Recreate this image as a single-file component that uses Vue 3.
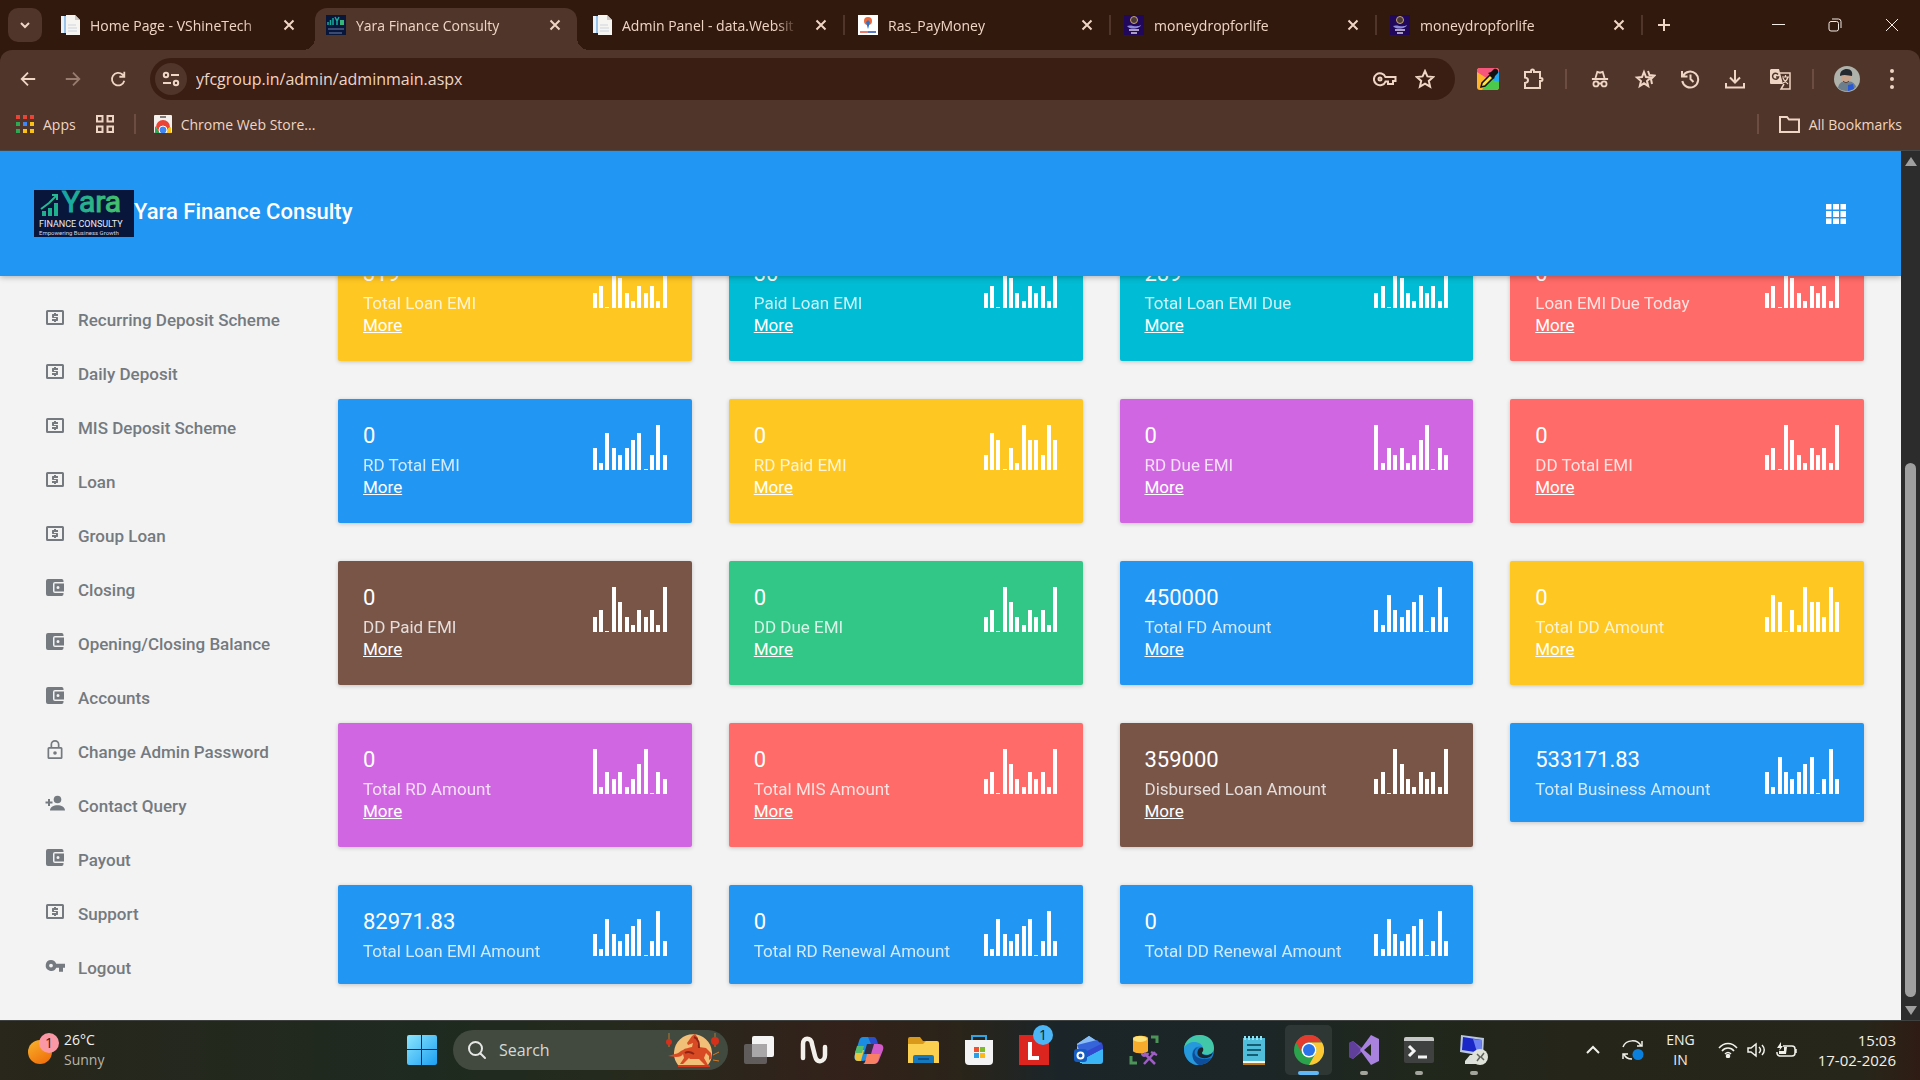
<template>
  <div class="screen">
    <header class="chrome">
      <div class="tabstrip">
        <button class="tab-search" aria-label="Search tabs">
          <svg width="14" height="14" viewBox="0 0 14 14" class="line"><path d="M3 5l4 4 4-4" /></svg>
        </button>
        <div class="tabs">
          <div v-for="(tab, i) in tabs" :key="i" class="tab" :class="{ active: tab.active, divided: i > 1 }">
            <svg v-if="tab.icon === 'page'" width="20" height="20" viewBox="0 0 20 20">
              <path d="M1 1h12v17H1z" fill="#9cc4ea" /><path d="M1 1h3v17H1z" fill="#e8f2fb" />
              <path d="M6 0h9l5 5v15H6z" fill="#f7f5f2" /><path d="M15 0v5h5z" fill="#cfc9c3" />
              <path d="M8 10h8M8 13h9M8 16h9" stroke="#cbd5dc" />
            </svg>
            <svg v-else-if="tab.icon === 'yara'" width="20" height="20" viewBox="0 0 20 20">
              <path d="M0 0h20v20H0z" fill="#07163a" />
              <path d="M2 10V7m2.5 3V5m2.500 5V3M9 2l2 4 2-4m-2 4v4" stroke="#16a99c" stroke-width="1.5" fill="none" />
              <path d="M14 5h4v5h-4z" fill="#36b678" /><path d="M2 14h16M3 18h13" stroke="#6f7fa8" />
            </svg>
            <svg v-else-if="tab.icon === 'ras'" width="20" height="20" viewBox="0 0 20 20">
              <path d="M0 0h20v20H0z" fill="#fff" /><circle cx="10" cy="6" r="4" fill="#ef6a3a" />
              <path d="M10 5l2 2-2 7-2-7z" fill="#2c74c9" /><path d="M2 17h8" stroke="#e8796d" stroke-width="2" /><path d="M10 17h8" stroke="#5d79c5" stroke-width="2" />
            </svg>
            <svg v-else width="20" height="20" viewBox="0 0 20 20">
              <path d="M0 0h20v20H0z" fill="#22085c" /><circle cx="10" cy="5" r="3.5" fill="#4a3a35" stroke="#c6a574" />
              <path d="M3 11c4-2 9 2 14-1-1 4-11 5-14 1z" fill="#8d8bd8" /><path d="M5 15h10M7 18h6" stroke="#d8cfe8" stroke-width="1.5" />
            </svg>
            <span class="tab-title">{{ tab.title }}</span>
            <button class="tab-close" aria-label="Close tab">
              <svg width="12" height="12" viewBox="0 0 12 12" class="line"><path d="M1.500 1.500l9 9M10.500 1.500l-9 9" /></svg>
            </button>
          </div>
        </div>
        <button class="new-tab" aria-label="New tab">
          <svg width="14" height="14" viewBox="0 0 14 14" class="line"><path d="M7 1v12M1 7h12" /></svg>
        </button>
        <div class="window-controls">
          <button aria-label="Minimize"><svg width="14" height="14" viewBox="0 0 14 14" class="thin"><path d="M1 6.500h13" /></svg></button>
          <button aria-label="Restore"><svg width="14" height="14" viewBox="0 0 14 14" class="thin"><rect x="1" y="3.5" width="9.5" height="9.5" rx="2" /><path d="M4 1h6.500a2.500 2.500 0 0 1 2.500 2.500V10" /></svg></button>
          <button aria-label="Close"><svg width="14" height="14" viewBox="0 0 14 14" class="thin"><path d="M1 1l12 12M13 1L1 13" /></svg></button>
        </div>
      </div>

      <div class="toolbar">
        <button class="tool" aria-label="Back"><svg width="18" height="18" viewBox="0 0 20 20" class="line"><path d="M18 10H3M10 3l-7 7 7 7" /></svg></button>
        <button class="tool dim" aria-label="Forward"><svg width="18" height="18" viewBox="0 0 20 20" class="line"><path d="M2 10h15M10 3l7 7-7 7" /></svg></button>
        <button class="tool" aria-label="Reload"><svg width="18" height="18" viewBox="0 0 20 20" class="line"><path d="M17 12a7 7 0 1 1-2-7l2 2M17 2v5.500h-5.500" /></svg></button>
        <div class="omnibox">
          <button class="site-info" aria-label="Site information">
            <svg width="18" height="18" viewBox="0 0 18 18" class="line"><circle cx="4" cy="5" r="2.2" /><path d="M9 5h8M1 13h8" /><circle cx="14" cy="13" r="2.2" /></svg>
          </button>
          <input v-model="url" class="url" type="text" aria-label="Address">
          <button class="omni-btn" aria-label="Passwords"><svg width="24" height="20" viewBox="0 0 24 20" class="line"><path d="M12.500 8a6 6 0 1 0 0 4.500H15V15h5v-3h2.500V8z" /><circle cx="7" cy="10" r="1.5" /></svg></button>
          <button class="omni-btn" aria-label="Bookmark"><svg width="20" height="20" viewBox="0 0 20 20" class="line"><path d="M10 2l2.400 5.400 5.800.6-4.400 3.900 1.300 5.700L10 14.600l-5.100 3 1.300-5.700L1.800 8l5.800-.6z" /></svg></button>
        </div>
        <button class="tool" aria-label="Color picker">
          <svg width="22" height="22" viewBox="0 0 22 22">
            <rect width="22" height="22" rx="3" fill="#ffb52b" /><path d="M3 0h16a3 3 0 0 1 3 3L11 11 0 4a3 3 0 0 1 3-4z" fill="#f7567c" /><path d="M22 3v12L11 11z" fill="#21a8f5" />
            <path d="M22 14v5a3 3 0 0 1-3 3H5l6-11z" fill="#4cc94a" /><path d="M4 19l1-4 8-8 3 3-8 8z" fill="#ffe14a" stroke="#111" stroke-width="1.5" /><path d="M11 5l3-1 3-3c3-1 5 2 4 4l-3 3-1 3z" fill="#111" />
          </svg>
        </button>
        <button class="tool" aria-label="Extensions"><svg width="22" height="22" viewBox="0 0 22 22" class="line"><path d="M3 4h6V3a1.500 1.500 0 0 1 3 0v1h6v6h1a1.500 1.500 0 0 1 0 3h-1v7H3v-5c4-.5 4-5 0-5.500z" /></svg></button>
        <span class="sep" />
        <button class="tool" aria-label="Incognito"><svg width="18" height="18" viewBox="0 0 20 20" class="line"><path d="M1 10h18M5 9l2-7 3 1 3-1 2 7M8.500 15h3" /><circle cx="5.5" cy="15.5" r="2.8" /><circle cx="14.5" cy="15.5" r="2.8" /></svg></button>
        <button class="tool" aria-label="Bookmarks list"><svg width="22" height="22" viewBox="0 0 22 22" class="line"><path d="M10 4l2 5 5 .5-4 3.500 1.200 5L10 15.300 5.800 18 7 13 3 9.500 8 9zM14 3l1.500 4 5 .5-3.500 3.500 1 5" /></svg></button>
        <button class="tool" aria-label="History"><svg width="20" height="20" viewBox="0 0 20 20" class="line"><path d="M3 7a8 8 0 1 1-.7 5M2 2v5.500h5.500M10.500 5.500V10l3 3" /></svg></button>
        <button class="tool" aria-label="Downloads"><svg width="20" height="20" viewBox="0 0 20 20" class="line"><path d="M10 1v12M5 8.500l5 5 5-5M1 14v4.500h18V14" /></svg></button>
        <button class="tool" aria-label="Translate">
          <svg width="22" height="22" viewBox="0 0 22 22"><path d="M2 1h8l4 15H2a1 1 0 0 1-1-1V2z" fill="#efd5c4" /><path d="M11 5h10v16H12l3-5" fill="none" stroke="#efd5c4" stroke-width="1.5" /><path d="M9 6.500A3 3 0 1 0 9.500 9H7" fill="none" stroke="#50352a" stroke-width="1.5" /><path d="M13 9h7M16.500 7v2M19 9c-1 4-3 5-5 6M14 10c1 3 3 4 5 6" fill="none" stroke="#efd5c4" stroke-width="1.2" /></svg>
        </button>
        <span class="sep" />
        <button class="tool" aria-label="Profile">
          <svg width="26" height="26" viewBox="0 0 26 26"><circle cx="13" cy="13" r="13" fill="#aeb2ab" /><path d="M4 22c1-6 5-7 9-7s8 2 9 6a13 13 0 0 1-18 1z" fill="#6c7d8c" /><path d="M14 19l5-1 1 5-6 2z" fill="#2958d8" /><ellipse cx="12" cy="11" rx="5" ry="6" fill="#c9a58e" /><path d="M6 10c0-5 3-7 7-7s6 3 5 7c-3 0-7-2-12 0z" fill="#252a31" /><path d="M9 15c2 2 4 2 6 0" stroke="#39312e" fill="none" /></svg>
        </button>
        <button class="tool" aria-label="Menu"><svg width="20" height="22" viewBox="0 0 20 22" fill="#efd5c4"><circle cx="10" cy="3" r="2" /><circle cx="10" cy="11" r="2" /><circle cx="10" cy="19" r="2" /></svg></button>
      </div>

      <nav class="bookmarks">
        <a href="#" class="bookmark">
          <svg width="18" height="18" viewBox="0 0 18 18">
            <rect v-for="(c, i) in appColors" :key="i" :x="(i % 3) * 7" :y="Math.floor(i / 3) * 7" width="4" height="4" :fill="c" />
          </svg>
          Apps
        </a>
        <a href="#" class="bookmark" aria-label="Tab groups"><svg width="18" height="18" viewBox="0 0 18 18" class="line"><path d="M1 1h5.500v5.500H1zM11.500 1H17v5.500h-5.500zM1 11.500h5.500V17H1zM11.500 11.500H17V17h-5.500z" /></svg></a>
        <span class="bar-sep" />
        <a href="#" class="bookmark store">
          <svg width="18" height="18" viewBox="0 0 18 18"><rect width="18" height="18" rx="1" fill="#f3f0ee" /><path d="M6 2h6" stroke="#5b5552" stroke-width="1.5" /><path d="M2 12a7 7 0 0 1 14 0l-3 6H5z" fill="#e94435" /><path d="M1 11l5 7H1z" fill="#2fa853" /><path d="M17 12v6h-5l2-5z" fill="#fbc116" /><circle cx="9" cy="15" r="4" fill="#4286f5" stroke="#fff" /></svg>
          Chrome Web Store...
        </a>
        <span class="bar-sep push" />
        <a href="#" class="bookmark all"><svg width="21" height="18" viewBox="0 0 21 18" class="line"><path d="M1 2h7l2 2.500h10V17H1z" /></svg>All Bookmarks</a>
      </nav>
    </header>

    <div class="viewport">
      <div class="page">
        <div class="header">
          <a href="#" class="brand">
            <svg width="100" height="47" viewBox="0 0 100 47">
              <defs><linearGradient id="yara"><stop offset="0" stop-color="#12a6a8" /><stop offset="1" stop-color="#46c268" /></linearGradient></defs>
              <path d="M0 0h100v47H0z" fill="#07163a" />
              <path d="M8 26v-5h4v5zM14 26v-8h4v8zM20 26V13h4v13z" fill="#1fb08d" /><path d="M7 19l8-6 8-8M18 5h5v5" fill="none" stroke="#27b994" stroke-width="2" />
              <text x="28" y="22" font-size="30" fill="url(#yara)" stroke="url(#yara)" class="logo-text">Yara</text>
              <text x="5" y="37" font-size="9" fill="#e8ecf3" class="logo-text">FINANCE CONSULTY</text>
              <text x="5" y="45" font-size="6" fill="#cfd5e2" class="logo-text">Empowering Business Growth</text>
            </svg>
            <span>Yara Finance Consulty</span>
          </a>
          <button aria-label="Apps">
            <svg width="20" height="20" viewBox="0 0 20 20" fill="#fff"><path d="M0 0h5.500v5.500H0zM7 0h6v5.500H7zM14.500 0H20v5.500h-5.500zM0 7h5.500v6H0zM7 7h6v6H7zM14.500 7H20v6h-5.500zM0 14.500h5.500V20H0zM7 14.500h6V20H7zM14.500 14.500H20V20h-5.500z" /></svg>
          </button>
        </div>

        <div class="content">
          <aside class="sidebar">
            <a v-for="item in menu" :key="item.label" href="#" class="menu-item">
              <svg width="20" height="20" viewBox="0 0 20 20" fill="currentColor">
                <g v-if="item.icon === 'money'"><path d="M2.500 2h15A1.500 1.500 0 0 1 19 3.500v12a1.500 1.500 0 0 1-1.500 1.500h-15A1.500 1.500 0 0 1 1 15.500v-12A1.500 1.500 0 0 1 2.500 2zm.5 2v11h14V4z" fill-rule="evenodd" /><path d="M9 5h2v1h2v2H9v1h3.500l.5.500v3l-.5.500H11v1H9v-1H7v-2h4v-1H7.500L7 9.500v-3l.5-.5H9z" /></g>
                <g v-else-if="item.icon === 'wallet'"><path d="M3 1h14a2 2 0 0 1 1.500 2v1H10a2 2 0 0 0-2 2v7a2 2 0 0 0 2 2h8.500v1a2 2 0 0 1-1.500 2H3a2 2 0 0 1-2-2V3a2 2 0 0 1 2-2z" /><path d="M9.500 5.500H19v8H9.500zM13 8a1.500 1.500 0 1 0 0 3 1.500 1.500 0 0 0 0-3z" fill-rule="evenodd" /></g>
                <g v-else-if="item.icon === 'lock'"><path d="M10 0a4.500 4.500 0 0 1 4.500 4.500V7H16a1.500 1.500 0 0 1 1.500 1.500v9A1.500 1.500 0 0 1 16 19H4a1.500 1.500 0 0 1-1.500-1.500v-9A1.500 1.500 0 0 1 4 7h1.500V4.500A4.500 4.500 0 0 1 10 0zm0 1.700a2.800 2.800 0 0 0-2.800 2.800V7h5.600V4.500A2.800 2.800 0 0 0 10 1.700zM4.200 8.700v8.600h11.600V8.700z" fill-rule="evenodd" /><circle cx="10" cy="13" r="1.8" /></g>
                <g v-else-if="item.icon === 'person'"><circle cx="12.5" cy="5.5" r="3.8" /><path d="M5 16.500c0-7 15-7 15 0zM3 5h2v2.500h2.500v2H5V12H3V9.500H.5v-2H3z" /></g>
                <path v-else d="M6 4a5.500 5.500 0 0 1 5.200 3.800H20v4h-2v4h-4v-4h-2.800A5.500 5.500 0 1 1 6 4zm0 3.700a1.900 1.900 0 1 0 0 3.800 1.900 1.900 0 0 0 0-3.800z" fill-rule="evenodd" />
              </svg>
              {{ item.label }}
            </a>
          </aside>

          <main class="cards">
            <div v-for="card in cards" :key="card.label" class="card" :class="card.color">
              <div>
                <h2>{{ card.value }}</h2>
                <small>{{ card.label }}</small>
                <a v-if="!card.noLink" href="#">More</a>
              </div>
              <div class="spark">
                <span v-for="(n, i) in sparks[card.spark]" :key="i" :style="{ height: barHeight(n) }" />
              </div>
            </div>
          </main>
        </div>
      </div>

      <div class="scrollbar">
        <svg width="12" height="10" viewBox="0 0 12 10"><path d="M6 0l6 9H0z" fill="#9f9f9f" /></svg>
        <div class="track"><div class="thumb" /></div>
        <svg width="12" height="10" viewBox="0 0 12 10"><path d="M6 10l6-9H0z" fill="#9f9f9f" /></svg>
      </div>
    </div>

    <footer class="taskbar">
      <button class="weather">
        <svg width="34" height="34" viewBox="0 0 34 34">
          <defs><linearGradient id="sun" x2="0.6" y2="1"><stop offset="0" stop-color="#f7b52c" /><stop offset="1" stop-color="#f0720d" /></linearGradient></defs>
          <circle cx="13" cy="19" r="12" fill="url(#sun)" /><circle cx="22" cy="10" r="10" fill="#fb98a5" />
          <text x="22" y="15" text-anchor="middle" font-size="14" fill="#30191c">1</text>
        </svg>
        <span class="two-line"><span>26°C</span><span class="muted">Sunny</span></span>
      </button>

      <button class="task" aria-label="Start">
        <svg width="30" height="30" viewBox="0 0 30 30"><defs><linearGradient id="win" x2="1" y2="1"><stop offset="0" stop-color="#8ce6fd" /><stop offset="1" stop-color="#1c9ff2" /></linearGradient></defs><path d="M2 0h12v14H0V2a2 2 0 0 1 2-2zM15 0h13a2 2 0 0 1 2 2v12H15zM0 15h14v15H2a2 2 0 0 1-2-2zM15 15h15v13a2 2 0 0 1-2 2H15z" fill="url(#win)" /></svg>
      </button>
      <label class="search">
        <svg width="20" height="20" viewBox="0 0 20 20" fill="none" stroke="#e5e8e4" stroke-width="2" stroke-linecap="round"><circle cx="8.5" cy="8.5" r="6.5" /><path d="M13.500 13.500L18 18" /></svg>
        <input type="text" placeholder="Search" aria-label="Search">
        <svg width="58" height="36" viewBox="0 0 58 36">
          <path d="M14 33a19 19 0 1 1 30 0z" fill="#f2bf78" /><path d="M14 34h32" stroke="#d9361f" stroke-width="2" />
          <path d="M31 2l-3 2-5 7 1 2 5-2-1 4c-3 1-7 1-9 3-3 1-5 4-8 4l-7 2 8 1c4 0 6-1 7-3l1 4-4 6h3l6-6 1 1 9 0 6 6h3l-4-7 2-5 3 3v4l3-2-1-5-5-5-7-1c-2-2-1-6-1-9z" fill="#d84a24" />
          <path d="M30 5c5 2 5 7 5 11M21 21c3-2 6-1 9 1" fill="none" stroke="#8f2415" stroke-width="2" />
          <path d="M5 1v14M51 1v14" stroke="#b6782c" /><circle cx="5" cy="10" r="3" fill="#d6301b" /><circle cx="51" cy="9" r="4" fill="#d6301b" /><path d="M49 23l6-3M49 28l6 1" stroke="#d77a24" />
        </svg>
      </label>

      <div class="tasks">
        <button class="task" aria-label="Task view"><svg width="30" height="30" viewBox="0 0 30 30"><rect x="8" y="1" width="22" height="21" rx="2" fill="#f4f4f4" /><rect y="9" width="23" height="20" rx="2" fill="#6b6667" opacity=".85" /><path d="M8 9h15v13H8z" fill="#aaa7a9" /></svg></button>
        <button class="task" aria-label="Notes"><svg width="28" height="28" viewBox="0 0 28 28" fill="none" stroke="#f3f0ec" stroke-width="4.5" stroke-linecap="round"><path d="M3 22V8c0-7 8-7 9 0l3 12c2 8 10 6 10-1V11" /></svg></button>
        <button class="task" aria-label="Copilot"><svg width="30" height="28" viewBox="0 0 30 28"><path d="M9 1h11l-6 20c-1 3-3 4-6 4H4c-4 0-4-4-3-7L5 5c1-3 2-4 4-4z" fill="#1b8ee4" /><path d="M2 14h8L7 25H4c-4 0-4-4-2-11z" fill="#e9c43c" /><path d="M3 10h7l-2 7H1z" fill="#54be6c" /><path d="M17 8h8c4 0 5 3 4 6l-4 10c-1 3-3 4-6 4H9c5 0 5-7 8-20z" fill="#d15bc8" /><path d="M13 18h13l-2 7c-1 2-3 3-5 3H9c2 0 3-5 4-10z" fill="#fa8064" /><path d="M13 8h7l-3 10h-7z" fill="#352b43" /><path d="M14 1h6c2 0 3 3 4 7h-7z" fill="#294fcf" /></svg></button>
        <button class="task" aria-label="File Explorer"><svg width="31" height="28" viewBox="0 0 31 28"><path d="M0 3a2 2 0 0 1 2-2h10l3 4h13v8H0z" fill="#d99a1c" /><path d="M0 8h15l3-3h11a2 2 0 0 1 2 2v20H0z" fill="#fbcf50" /><path d="M5 27v-6a2 2 0 0 1 2-2h17a2 2 0 0 1 2 2v6z" fill="#1679bd" /><path d="M10 22h11v2H10z" fill="#0d538e" /></svg></button>
        <button class="task" aria-label="Store"><svg width="30" height="30" viewBox="0 0 30 30"><path d="M8 7V1h14v6" fill="none" stroke="#2fa5e4" stroke-width="2" /><path d="M1 5h28v21a4 4 0 0 1-4 4H5a4 4 0 0 1-4-4z" fill="#f3f3f3" /><path d="M10 12h5v5h-5z" fill="#ef5130" /><path d="M16 12h5v5h-5z" fill="#7dba2c" /><path d="M10 18h5v5h-5z" fill="#2a9fe8" /><path d="M16 18h5v5h-5z" fill="#fbb91c" /></svg></button>
        <button class="task" aria-label="L">
          <svg width="30" height="30" viewBox="0 0 30 30"><path d="M0 0h30v30H0z" fill="#dc251e" /><path d="M11 7v16h9" fill="none" stroke="#fff" stroke-width="4" /></svg>
          <span class="badge">1</span>
        </button>
        <button class="task" aria-label="Outlook"><svg width="30" height="30" viewBox="0 0 30 30"><path d="M3 9L15 1l13 9v18H6z" fill="#62cdfa" /><path d="M3 9L15 1l8 5L3 20z" fill="#89bcf5" /><path d="M8 16L27 7c2 2 2 4 2 7L10 24z" fill="#314ad0" /><path d="M3 10l20-5 4 4-20 10z" fill="#3665d9" /><path d="M8 25l21-11v12c0 2-1 3-3 3H8z" fill="#3bb5f5" /><rect y="14" width="13" height="13" rx="3" fill="#155cc0" /><circle cx="6.5" cy="20.5" r="3" fill="none" stroke="#fff" stroke-width="2" /></svg></button>
        <button class="task" aria-label="SQL Server"><svg width="30" height="30" viewBox="0 0 30 30"><path d="M4 3c1-3 14-3 15 0v13c-1 3-14 3-15 0z" fill="#f7ad2b" /><ellipse cx="11" cy="4" rx="7" ry="3" fill="#fbe27b" /><path d="M22 2h6v6M2 21v7h6" fill="none" stroke="#4d9458" stroke-width="3" /><path d="M15 29l11-12M15 18l11 11M13 18c0 4 5 3 6 0M22 17l6 3" stroke="#9d5fc2" stroke-width="2.5" fill="none" /></svg></button>
        <button class="task" aria-label="Edge"><svg width="30" height="30" viewBox="0 0 30 30"><circle cx="15" cy="15" r="15" fill="#1680cf" /><path d="M0 14C1-4 30-5 30 13c0 6-6 8-11 6-3-1 0-2 0-5C18 7 5 5 0 14z" fill="#42c7a8" /><path d="M0 13C5 4 18 6 19 13c-6-4-12 1-10 8 1 4 4 7 7 9C7 31 0 24 0 13z" fill="#2699dd" /><path d="M14 12c-8 6-1 15 13 11-3 5-8 7-12 7C7 26 6 15 14 12z" fill="#0e4d99" /><path d="M19 13c1 3-1 4-1 5 0 3 9 3 11-1-1 4-3 5-6 6-8 1-11-3-9-8 1-2 3-3 5-2z" fill="#1c252b" /></svg></button>
        <button class="task" aria-label="Notepad"><svg width="24" height="30" viewBox="0 0 24 30"><path d="M1 3h22v24H1z" fill="#50bddb" /><path d="M1 26h22v2H1z" fill="#f7f4ea" /><path d="M1 28h22v2H1z" fill="#b87a18" /><path d="M3 1v4M7 1v4M11 1v4M15 1v4M19 1v4" stroke="#8ee4f5" stroke-width="2" /><path d="M5 10h14M5 15h14M5 20h11" stroke="#145d75" stroke-width="2" /></svg></button>
        <button class="task running current" aria-label="Chrome"><svg width="30" height="30" viewBox="0 0 30 30"><circle cx="15" cy="15" r="15" fill="#2ba24c" /><path d="M2 7.500A15 15 0 0 1 28 7.500H15a7.500 7.500 0 0 0-6.500 11z" fill="#e33b2e" /><path d="M28 7.500A15 15 0 0 1 15 30l6.500-11.500a7.500 7.500 0 0 0-6.500-11z" fill="#fcc934" /><circle cx="15" cy="15" r="7.5" fill="#fff" /><circle cx="15" cy="15" r="6" fill="#2a73e8" /></svg></button>
        <button class="task running" aria-label="Visual Studio"><svg width="30" height="30" viewBox="0 0 30 30"><path d="M0 8l4-2 18 14V9L4 24l-4-2z" fill="#7c54b9" /><path d="M4 6l8 9-8 9-4-2V8z" fill="#5f3f99" /><path d="M22 0l8 4v22l-8 4L11 15z" fill="#a981df" /><path d="M22 9v12l-7-6z" fill="#20271b" /></svg></button>
        <button class="task running" aria-label="Terminal"><svg width="30" height="26" viewBox="0 0 30 26"><rect width="30" height="26" rx="2" fill="#3f4140" /><path d="M2 0h26a2 2 0 0 1 2 2v2H0V2a2 2 0 0 1 2-2z" fill="#c5c8c6" /><path d="M5 9l5 5-5 5M14 20h9" fill="none" stroke="#f5f5f5" stroke-width="3" /></svg></button>
        <button class="task running" aria-label="Remote desktop"><svg width="30" height="30" viewBox="0 0 30 30"><path d="M2 0l23 3-1 18L1 17z" fill="#b9c6df" /><path d="M4 2l19 3-1 13L3 15z" fill="#1c27c8" /><path d="M14 4l9 1-1 13-4-1z" fill="#6d82f0" /><path d="M11 20h6v5h6v4H6v-3z" fill="#dce0da" /><circle cx="21" cy="22" r="8" fill="#dfe2d8" /><path d="M18 19l3 3-3 4M25 18l-3 4 3 3" fill="none" stroke="#60645c" stroke-width="1.5" /></svg></button>
      </div>

      <div class="tray">
        <button aria-label="Hidden icons"><svg width="16" height="16" viewBox="0 0 16 16" class="light"><path d="M2 11l6-6 6 6" /></svg></button>
        <button class="sync" aria-label="Updates"><svg width="22" height="22" viewBox="0 0 22 22" class="light slim"><path d="M1 8c3-8 15-8 18-1M20 2v5h-5M10 20c-4 0-7-2-8-5M1 20v-5h5" /><circle cx="16" cy="15.5" r="5.5" fill="#0a7fdc" stroke="none" /></svg></button>
        <button class="two-line lang"><span>ENG</span><span>IN</span></button>
        <button class="quick" aria-label="Network, sound, battery">
          <svg width="20" height="16" viewBox="0 0 20 16" class="light slim"><path d="M1 6c5-6 13-6 18 0M4 9c3-4 9-4 12 0M7 12c2-2 4-2 6 0" /><circle cx="10" cy="14" r="1.5" fill="#f1f1ea" /></svg>
          <svg width="20" height="16" viewBox="0 0 20 16" class="light slim"><path d="M1 6h3l5-4v12l-5-4H1zM12 5c2 2 2 4 0 6M15 3c3 3 3 7 0 10" /></svg>
          <svg width="22" height="16" viewBox="0 0 22 16" class="light slim"><path d="M7 4h9a3 3 0 0 1 3 3v4a3 3 0 0 1-3 3H4a3 3 0 0 1-3-3v-1M20 7v4" /><path d="M8 5h3l-1 7H3V9h5zM5 0L1 6h3L3 9l4-5H5z" fill="#f1f1ea" stroke="none" /></svg>
        </button>
        <button class="two-line clock"><span>15:03</span><span>17-02-2026</span></button>
      </div>
    </footer>
  </div>
</template>

<script setup>
import { ref } from 'vue'

const url = ref('yfcgroup.in/admin/adminmain.aspx')

const tabs = [
  { title: 'Home Page - VShineTech', icon: 'page' },
  { title: 'Yara Finance Consulty', icon: 'yara', active: true },
  { title: 'Admin Panel - data.Websit', icon: 'page' },
  { title: 'Ras_PayMoney', icon: 'ras' },
  { title: 'moneydropforlife', icon: 'drop' },
  { title: 'moneydropforlife', icon: 'drop' },
]

const appColors = ['#e94435', '#e94435', '#e94435', '#2fa853', '#4286f5', '#fbc116', '#2fa853', '#fbc116', '#fbc116']

const menu = [
  { label: 'Recurring Deposit Scheme', icon: 'money' },
  { label: 'Daily Deposit', icon: 'money' },
  { label: 'MIS Deposit Scheme', icon: 'money' },
  { label: 'Loan', icon: 'money' },
  { label: 'Group Loan', icon: 'money' },
  { label: 'Closing', icon: 'wallet' },
  { label: 'Opening/Closing Balance', icon: 'wallet' },
  { label: 'Accounts', icon: 'wallet' },
  { label: 'Change Admin Password', icon: 'lock' },
  { label: 'Contact Query', icon: 'person' },
  { label: 'Payout', icon: 'wallet' },
  { label: 'Support', icon: 'money' },
  { label: 'Logout', icon: 'key' },
]

// sparkline values, 0 to 6
const sparks = {
  a: [3, 1, 5, 3, 2, 3, 4, 5, 0, 2, 6, 2],
  b: [2, 5, 4, 0, 3, 1, 6, 4, 4, 2, 6, 4],
  c: [6, 1, 3, 2, 3, 1, 2, 4, 6, 0, 3, 2],
  d: [2, 3, 0, 6, 4, 2, 1, 3, 2, 3, 1, 6],
}

const cards = [
  { value: '319', label: 'Total Loan EMI', color: 'yellow', spark: 'd' },
  { value: '30', label: 'Paid Loan EMI', color: 'cyan', spark: 'd' },
  { value: '289', label: 'Total Loan EMI Due', color: 'cyan', spark: 'd' },
  { value: '0', label: 'Loan EMI Due Today', color: 'red', spark: 'd' },
  { value: '0', label: 'RD Total EMI', color: 'blue', spark: 'a' },
  { value: '0', label: 'RD Paid EMI', color: 'yellow', spark: 'b' },
  { value: '0', label: 'RD Due EMI', color: 'purple', spark: 'c' },
  { value: '0', label: 'DD Total EMI', color: 'red', spark: 'd' },
  { value: '0', label: 'DD Paid EMI', color: 'brown', spark: 'd' },
  { value: '0', label: 'DD Due EMI', color: 'green', spark: 'd' },
  { value: '450000', label: 'Total FD Amount', color: 'blue', spark: 'a' },
  { value: '0', label: 'Total DD Amount', color: 'yellow', spark: 'b' },
  { value: '0', label: 'Total RD Amount', color: 'purple', spark: 'c' },
  { value: '0', label: 'Total MIS Amount', color: 'red', spark: 'd' },
  { value: '359000', label: 'Disbursed Loan Amount', color: 'brown', spark: 'd' },
  { value: '533171.83', label: 'Total Business Amount', color: 'blue', spark: 'a', noLink: true },
  { value: '82971.83', label: 'Total Loan EMI Amount', color: 'blue', spark: 'a', noLink: true },
  { value: '0', label: 'Total RD Renewal Amount', color: 'blue', spark: 'a', noLink: true },
  { value: '0', label: 'Total DD Renewal Amount', color: 'blue', spark: 'a', noLink: true },
]

function barHeight(n) {
  return n ? (n / 6) * 100 + '%' : '1px'
}
</script>

<style>
body { margin: 0; overflow: hidden; }
</style>

<style scoped>
.screen { display: flex; flex-direction: column; height: 100vh; overflow: hidden; font-family: "Open Sans", "Noto Sans", sans-serif; }
button { display: flex; align-items: center; justify-content: center; padding: 0; border: 0; background: none; color: inherit; font: inherit; }
input { min-width: 0; padding: 0; border: 0; outline: 0; background: none; color: inherit; font: inherit; }
a { color: inherit; text-decoration: none; }
svg { flex-shrink: 0; }
.line { fill: none; stroke: #efd5c4; stroke-width: 2; }
.thin { fill: none; stroke: #f5ece6; stroke-width: 1; }

/* browser */
.chrome { flex-shrink: 0; background: #32190d; color: #efd5c4; }
.tabstrip { display: flex; align-items: flex-start; height: 50px; padding-left: 8px; }
.tab-search { width: 34px; height: 34px; margin-top: 8px; border-radius: 10px; background: #50352a; }
.tabs { display: flex; margin: 8px 0 0 7px; }
.tab { position: relative; display: flex; align-items: center; gap: 10px; width: 266px; height: 42px; padding: 0 20px 8px 11px; box-sizing: border-box; font-size: 14px; }
.tab.divided::after { content: ""; position: absolute; right: 2px; top: 7px; width: 2px; height: 20px; background: #50352a; }
.tab.active { z-index: 1; width: 262px; margin-right: 4px; padding-right: 16px; border-radius: 12px 12px 0 0; background: #50352a; }
.tab.active::before, .tab.active::after { content: ""; position: absolute; bottom: 0; width: 12px; height: 12px; }
.tab.active::before { left: -12px; background: radial-gradient(circle at 0 0, transparent 12px, #50352a 12px); }
.tab.active::after { right: -12px; background: radial-gradient(circle at 100% 0, transparent 12px, #50352a 12px); }
.tab-title { flex: 1; overflow: hidden; white-space: nowrap; mask-image: linear-gradient(90deg, #000 88%, transparent); }
.tab-close { width: 12px; margin-left: 8px; }
.new-tab { width: 34px; height: 34px; margin-top: 8px; margin-left: 2px; }
.window-controls { display: flex; margin-left: auto; }
.window-controls button { width: 57px; height: 49px; }
.toolbar { display: flex; align-items: center; height: 50px; padding: 8px 6px 0 5px; border-radius: 12px 12px 0 0; background: #50352a; box-sizing: border-box; }
.tool { width: 45px; height: 40px; }
.tool.dim { opacity: .45; }
.omnibox { display: flex; flex: 1; align-items: center; height: 42px; margin: 0 10px; padding: 0 10px 0 5px; border-radius: 21px; background: #3a1e13; box-sizing: border-box; }
.site-info { width: 32px; height: 32px; margin-right: 9px; border-radius: 50%; background: #50352a; }
.url { flex: 1; font-size: 16px; }
.omni-btn { width: 40px; height: 32px; }
.sep { width: 2px; height: 20px; margin: 0 10px; background: #6c4d3f; }
.bookmarks { display: flex; align-items: center; height: 51px; padding: 0 18px 2px 16px; border-bottom: 1px solid #47484a; background: #50352a; box-sizing: border-box; font-size: 14px; }
.bookmark { display: flex; align-items: center; gap: 9px; margin-right: 20px; }
.bar-sep { width: 2px; height: 20px; background: #6c4d3f; }
.bar-sep.push { margin-left: auto; }
.store { margin-left: 18px; }
.all { margin: 0 0 0 20px; }

/* page */
.viewport { display: flex; flex: 1; min-height: 0; }
.page { flex: 1; overflow: hidden; background: #f3f3f3; color: #747a7f; font-family: Roboto, sans-serif; }
.header { position: relative; z-index: 2; display: flex; align-items: center; justify-content: space-between; height: 125px; padding: 0 55px 0 34px; background: #2196f3; box-shadow: 0 1px 6px rgba(0, 0, 0, .3); box-sizing: border-box; }
.brand { display: flex; align-items: center; color: #fff; font-size: 22px; font-weight: 500; }
.brand span { padding-bottom: 4px; }
.logo-text { font-family: Roboto, sans-serif; font-weight: 400; }
.content { display: flex; }
.sidebar { flex: 0 0 338px; padding: 17px 0 0 45px; box-sizing: border-box; }
.menu-item { display: flex; align-items: center; gap: 13px; height: 54px; font-size: 17px; font-weight: 500; }
.menu-item svg { padding-bottom: 4px; }
.cards { display: grid; flex: 1; grid-template-columns: repeat(4, 1fr); gap: 38px 37px; align-items: start; align-content: start; margin-top: -39px; padding-right: 37px; }
.card { display: flex; justify-content: space-between; padding: 25px 25px 22px; border-radius: 2px; color: #fff; font-size: 17px; line-height: 22px; box-shadow: 0 1px 4px rgba(0, 0, 0, .2); }
.card h2 { margin: 0 0 6px; font-size: 22px; font-weight: 400; line-height: 24px; }
.card small { display: block; font-size: 17px; opacity: .8; }
.card a { display: block; margin-bottom: 3px; text-decoration: underline; }
.spark { display: flex; align-items: flex-end; justify-content: space-between; width: 74px; height: 45px; margin-top: 1px; }
.spark span { width: 4px; background: #fff; }
.yellow { background: #ffc721; }
.cyan { background: #00bcd4; }
.red { background: #ff6b68; }
.blue { background: #2196f3; }
.purple { background: #d066e2; }
.brown { background: #795548; }
.green { background: #32c787; }
.scrollbar { display: flex; flex-direction: column; align-items: center; width: 19px; padding: 6px 0 5px; background: #2c2c2c; box-sizing: border-box; }
.track { display: flex; flex: 1; align-items: flex-end; padding: 8px 0; }
.thumb { width: 11px; height: 65%; border-radius: 6px; background: #9f9f9f; }

/* taskbar */
.taskbar { display: flex; flex-shrink: 0; align-items: center; height: 60px; padding-bottom: 2px; border-top: 1px solid #3f4040; background: linear-gradient(90deg, #29261b 0, #1e2a20 22%, #252a1d 32%, #33211a 44%, #2a2419 50%, #1b2529 55%, #1c2628 65%, #20271b 74%, #26251a 82%, #27261a 97%, #2f1c14); box-sizing: border-box; color: #f1f1ea; font-size: 14px; }
.weather { justify-content: flex-start; gap: 3px; width: 394px; padding-left: 27px; box-sizing: border-box; }
.two-line { display: flex; flex-direction: column; align-items: flex-start; line-height: 20px; }
.muted { color: #b9b4a8; }
.task { position: relative; width: 55px; height: 50px; }
.search { display: flex; align-items: center; width: 275px; height: 40px; margin: 0 3px 0 4px; padding: 0 6px 0 14px; border-radius: 20px; background: #424a40; box-sizing: border-box; font-size: 16px; }
.search input { flex: 1; margin-left: 12px; }
.search input::placeholder { color: #d5d9d3; opacity: 1; }
.tasks { display: flex; }
.badge { position: absolute; top: 0; right: 8px; width: 20px; border-radius: 10px; background: #4cb5f5; color: #12222d; line-height: 20px; }
.current { z-index: 0; }
.current::before { content: ""; position: absolute; inset: 0 4px; z-index: -1; border-radius: 5px; background: rgba(255, 255, 255, .08); }
.running::after { content: ""; position: absolute; bottom: 0; width: 8px; height: 4px; border-radius: 2px; background: #a3a59c; }
.running.current::after { width: 21px; background: #60b8f7; }
.tray { display: flex; align-items: center; margin-left: auto; padding-right: 24px; }
.light { fill: none; stroke: #f1f1ea; stroke-width: 2; }
.slim { stroke-width: 1.5; }
.sync { margin-left: 21px; }
.lang { align-items: center; margin: 0 23px 0 22px; }
.quick { gap: 9px; }
.clock { align-items: flex-end; margin-left: 20px; font-size: 15px; }
</style>
